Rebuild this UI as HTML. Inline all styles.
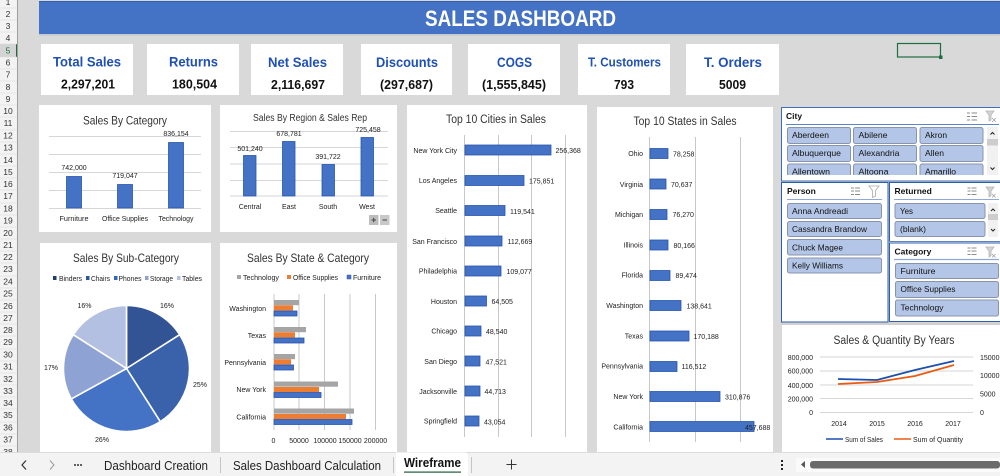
<!DOCTYPE html>
<html><head><meta charset="utf-8"><title>Sales Dashboard</title>
<style>
html,body{margin:0;padding:0;background:#d9d9d9;width:1000px;height:476px;overflow:hidden}
svg{display:block;font-family:"Liberation Sans",sans-serif}
body>svg{filter:blur(.25px)}
.c{text-anchor:middle}.e{text-anchor:end}
.l{font-size:7px;fill:#222}
.t{fill:#333}
.k{font-size:14px;font-weight:bold;fill:#1f50b5}
.v{font-size:13px;font-weight:bold;fill:#111}
.b{fill:#b4c6e7;stroke:#8794ab;stroke-width:1}
.bt{font-size:8.6px;fill:#111}
.h{font-size:8.5px;font-weight:bold;fill:#111}
.g{stroke:#d6d6d6;stroke-width:1}
.a{stroke:#c8c8c8;stroke-width:1}
.bar{fill:#4472c4;stroke:#2a56b0;stroke-width:.8}
.r{font-size:8.5px;fill:#333;text-anchor:middle}
.rl{stroke:#d8d8d8;stroke-width:.6}
.ic{stroke:#666;stroke-width:.8;fill:none}
.icg{stroke:#b5b5b5;stroke-width:.8;fill:#d4d4d4}
</style></head><body>
<svg width="1000" height="476" viewBox="0 0 1000 476" xmlns="http://www.w3.org/2000/svg">
<rect width="1000" height="476" fill="#d9d9d9"/>
<!-- row header -->
<rect x="0" y="0" width="17" height="452" fill="#f3f3f3"/>
<rect x="0" y="44" width="17" height="13" fill="#d4d4d4"/>
<rect x="16" y="44" width="1.5" height="13" fill="#1e6e42"/>
<line x1="17.5" y1="0" x2="17.5" y2="452" stroke="#9e9e9e"/>
<g class="rl">
<line x1="0" x2="17" y1="8" y2="8"/><line x1="0" x2="17" y1="20" y2="20"/><line x1="0" x2="17" y1="32" y2="32"/><line x1="0" x2="17" y1="44" y2="44"/><line x1="0" x2="17" y1="57" y2="57"/><line x1="0" x2="17" y1="69" y2="69"/><line x1="0" x2="17" y1="81" y2="81"/><line x1="0" x2="17" y1="93" y2="93"/><line x1="0" x2="17" y1="105" y2="105"/><line x1="0" x2="17" y1="117" y2="117"/><line x1="0" x2="17" y1="130" y2="130"/><line x1="0" x2="17" y1="142" y2="142"/><line x1="0" x2="17" y1="154" y2="154"/><line x1="0" x2="17" y1="166" y2="166"/><line x1="0" x2="17" y1="178" y2="178"/><line x1="0" x2="17" y1="190" y2="190"/><line x1="0" x2="17" y1="203" y2="203"/><line x1="0" x2="17" y1="215" y2="215"/><line x1="0" x2="17" y1="227" y2="227"/><line x1="0" x2="17" y1="239" y2="239"/><line x1="0" x2="17" y1="251" y2="251"/><line x1="0" x2="17" y1="263" y2="263"/><line x1="0" x2="17" y1="276" y2="276"/><line x1="0" x2="17" y1="288" y2="288"/><line x1="0" x2="17" y1="300" y2="300"/><line x1="0" x2="17" y1="312" y2="312"/><line x1="0" x2="17" y1="324" y2="324"/><line x1="0" x2="17" y1="336" y2="336"/><line x1="0" x2="17" y1="349" y2="349"/><line x1="0" x2="17" y1="361" y2="361"/><line x1="0" x2="17" y1="373" y2="373"/><line x1="0" x2="17" y1="385" y2="385"/><line x1="0" x2="17" y1="397" y2="397"/><line x1="0" x2="17" y1="409" y2="409"/><line x1="0" x2="17" y1="422" y2="422"/><line x1="0" x2="17" y1="434" y2="434"/><line x1="0" x2="17" y1="446" y2="446"/>
</g>
<g>
<text class="r" x="8" y="5">1</text><text class="r" x="8" y="17">2</text><text class="r" x="8" y="29">3</text><text class="r" x="8" y="41">4</text><text class="r" x="8" y="53.5" style="fill:#1e6e42">5</text><text class="r" x="8" y="65.5">6</text><text class="r" x="8" y="77.5">7</text><text class="r" x="8" y="90">8</text><text class="r" x="8" y="102">9</text><text class="r" x="8" y="114">10</text><text class="r" x="8" y="126">11</text><text class="r" x="8" y="138.5">12</text><text class="r" x="8" y="150.5">13</text><text class="r" x="8" y="163">14</text><text class="r" x="8" y="175">15</text><text class="r" x="8" y="187">16</text><text class="r" x="8" y="199">17</text><text class="r" x="8" y="211.5">18</text><text class="r" x="8" y="223.5">19</text><text class="r" x="8" y="236">20</text><text class="r" x="8" y="248">21</text><text class="r" x="8" y="260">22</text><text class="r" x="8" y="272">23</text><text class="r" x="8" y="284.5">24</text><text class="r" x="8" y="296.5">25</text><text class="r" x="8" y="309">26</text><text class="r" x="8" y="321">27</text><text class="r" x="8" y="333">28</text><text class="r" x="8" y="345">29</text><text class="r" x="8" y="357.5">30</text><text class="r" x="8" y="369.5">31</text><text class="r" x="8" y="382">32</text><text class="r" x="8" y="394">33</text><text class="r" x="8" y="406">34</text><text class="r" x="8" y="418">35</text><text class="r" x="8" y="430.5">36</text><text class="r" x="8" y="442.5">37</text><text class="r" x="8" y="455">38</text>
</g>
<!-- banner -->
<rect x="39" y="1" width="961" height="33" fill="#4472c4"/>
<rect x="39" y="1" width="961" height="1" fill="#2f5fb5"/>
<rect x="39" y="34" width="961" height="1.5" fill="#c4c8cf"/>
<text x="425" y="26" font-size="22" font-weight="bold" fill="#fff" textLength="191" lengthAdjust="spacingAndGlyphs">SALES DASHBOARD</text>
<!-- KPI cards -->
<g fill="#fff">
<rect x="41" y="44" width="92" height="51"/><rect x="147" y="44" width="92" height="51"/><rect x="251" y="44" width="92" height="51"/><rect x="361" y="44" width="91" height="51"/><rect x="468" y="44" width="92" height="51"/><rect x="578" y="44" width="92" height="51"/><rect x="686" y="44" width="93" height="51"/>
</g>
<text class="k" x="53" y="66.5" textLength="68" lengthAdjust="spacingAndGlyphs">Total Sales</text>
<text class="k" x="169" y="66.5" textLength="49" lengthAdjust="spacingAndGlyphs">Returns</text>
<text class="k" x="268" y="67" textLength="59" lengthAdjust="spacingAndGlyphs">Net Sales</text>
<text class="k" x="376" y="67" textLength="62" lengthAdjust="spacingAndGlyphs">Discounts</text>
<text class="k" x="497" y="67" textLength="35" lengthAdjust="spacingAndGlyphs">COGS</text>
<text class="k" x="588" y="66.5" style="font-size:12.5px" textLength="73" lengthAdjust="spacingAndGlyphs">T. Customers</text>
<text class="k" x="704" y="67" textLength="58" lengthAdjust="spacingAndGlyphs">T. Orders</text>
<text class="v" x="61" y="88.5" textLength="54" lengthAdjust="spacingAndGlyphs">2,297,201</text>
<text class="v" x="172" y="88.5" textLength="45" lengthAdjust="spacingAndGlyphs">180,504</text>
<text class="v" x="271" y="89" textLength="54" lengthAdjust="spacingAndGlyphs">2,116,697</text>
<text class="v" x="380" y="89" textLength="53" lengthAdjust="spacingAndGlyphs">(297,687)</text>
<text class="v" x="482" y="89" textLength="64" lengthAdjust="spacingAndGlyphs">(1,555,845)</text>
<text class="v" x="614" y="89" textLength="20" lengthAdjust="spacingAndGlyphs">793</text>
<text class="v" x="719" y="89" textLength="27" lengthAdjust="spacingAndGlyphs">5009</text>
<!-- selected cell -->
<rect x="897.5" y="43.5" width="43" height="13.5" fill="#d9d9d9" stroke="#1e6e42" stroke-width="1.2"/>
<rect x="939" y="55.5" width="3.5" height="3.5" fill="#1e6e42"/>
<!-- Panels -->
<g fill="#fff">
<rect x="39" y="105" width="172" height="127"/><rect x="220" y="105" width="177" height="127"/><rect x="407" y="105" width="180" height="347"/><rect x="597" y="107" width="176" height="345"/><rect x="40" y="243" width="171" height="209"/><rect x="220" y="243" width="177" height="209"/><rect x="782" y="325" width="218" height="127"/>
</g>
<!-- Sales by Category -->
<text class="t c" x="125" y="124.5" font-size="12" textLength="84" lengthAdjust="spacingAndGlyphs">Sales By Category</text>
<g class="g"><line x1="49" x2="201" y1="136.5" y2="136.5"/><line x1="49" x2="201" y1="154.5" y2="154.5"/><line x1="49" x2="201" y1="172.5" y2="172.5"/><line x1="49" x2="201" y1="190.5" y2="190.5"/><line x1="49" x2="201" y1="208.5" y2="208.5"/></g>
<rect class="bar" x="66.5" y="176.5" width="15" height="31.5"/><rect class="bar" x="117.5" y="184.5" width="15" height="23.5"/><rect class="bar" x="168.5" y="142.5" width="15" height="65.5"/>
<g class="l c"><text x="74" y="170">742,000</text><text x="125" y="178">719,047</text><text x="176" y="136">836,154</text><text x="74" y="221" textLength="29" lengthAdjust="spacingAndGlyphs">Furniture</text><text x="125" y="221" textLength="46" lengthAdjust="spacingAndGlyphs">Office Supplies</text><text x="176" y="221" textLength="35" lengthAdjust="spacingAndGlyphs">Technology</text></g>
<!-- Sales by Region -->
<text class="t c" x="310" y="121" font-size="10" textLength="114" lengthAdjust="spacingAndGlyphs">Sales By Region &amp; Sales Rep</text>
<g class="g"><line x1="230" x2="388" y1="131.5" y2="131.5"/><line x1="230" x2="388" y1="147.5" y2="147.5"/><line x1="230" x2="388" y1="164" y2="164"/><line x1="230" x2="388" y1="180.5" y2="180.5"/><line x1="230" x2="388" y1="196" y2="196"/></g>
<rect class="bar" x="243.5" y="155.5" width="12.5" height="40.5"/><rect class="bar" x="282.5" y="141.5" width="12.5" height="54.5"/><rect class="bar" x="322" y="164.5" width="12.5" height="31.5"/><rect class="bar" x="361" y="137.5" width="12.5" height="58.5"/>
<g class="l c"><text x="250" y="151">501,240</text><text x="289" y="136">678,781</text><text x="328" y="159">391,722</text><text x="368" y="132">725,458</text><text x="250" y="209">Central</text><text x="289" y="209">East</text><text x="328" y="209">South</text><text x="367" y="209">West</text></g>
<rect x="369" y="215" width="9.5" height="10" fill="#bdbdbd"/><rect x="380" y="215" width="9.5" height="10" fill="#c8c8c8"/>
<path d="M371.5 220h4.5M373.7 217.8v4.5M382.5 220h4.5" stroke="#444" stroke-width="1" fill="none"/>
<!-- Top 10 Cities -->
<text class="t c" x="496" y="123" font-size="11.5" textLength="100" lengthAdjust="spacingAndGlyphs">Top 10 Cities in Sales</text>
<g class="a"><line x1="464.5" x2="464.5" y1="135" y2="437"/><line x1="498.5" x2="498.5" y1="135" y2="437"/><line x1="531.5" x2="531.5" y1="135" y2="437"/><line x1="565.5" x2="565.5" y1="135" y2="437"/></g>
<g>
<rect class="bar" x="465" y="145" width="86" height="10"/><rect class="bar" x="465" y="175.5" width="59" height="10"/><rect class="bar" x="465" y="205.5" width="40" height="10"/><rect class="bar" x="465" y="236" width="37" height="10"/><rect class="bar" x="465" y="266" width="36" height="10"/><rect class="bar" x="465" y="296" width="21.5" height="10"/><rect class="bar" x="465" y="326" width="16" height="10"/><rect class="bar" x="465" y="356" width="15" height="10"/><rect class="bar" x="465" y="386" width="15" height="10"/><rect class="bar" x="465" y="416" width="14" height="10"/>
</g>
<g class="l e">
<text x="457" y="153">New York City</text><text x="457" y="183">Los Angeles</text><text x="457" y="213">Seattle</text><text x="457" y="244">San Francisco</text><text x="457" y="273.5">Philadelphia</text><text x="457" y="304">Houston</text><text x="457" y="333.5">Chicago</text><text x="457" y="364">San Diego</text><text x="457" y="394">Jacksonville</text><text x="457" y="423.5">Springfield</text>
</g>
<g class="l">
<text x="555.5" y="153">256,368</text><text x="529" y="183.5">175,851</text><text x="510" y="214">119,541</text><text x="507.5" y="244">112,669</text><text x="506.5" y="274">109,077</text><text x="491.5" y="304">64,505</text><text x="486" y="334">48,540</text><text x="485.5" y="364.5">47,521</text><text x="484.5" y="394">44,713</text><text x="484" y="424.5">43,054</text>
</g>
<!-- Top 10 States -->
<text class="t c" x="685" y="125" font-size="11.5" textLength="103" lengthAdjust="spacingAndGlyphs">Top 10 States in Sales</text>
<g class="a"><line x1="649.5" x2="649.5" y1="137" y2="442"/><line x1="695.5" x2="695.5" y1="137" y2="442"/><line x1="740.5" x2="740.5" y1="137" y2="442"/></g>
<g>
<rect class="bar" x="650" y="148.5" width="18" height="10"/><rect class="bar" x="650" y="179" width="16" height="10"/><rect class="bar" x="650" y="209.5" width="17" height="10"/><rect class="bar" x="650" y="240" width="18" height="10"/><rect class="bar" x="650" y="270.5" width="20" height="10"/><rect class="bar" x="650" y="300.5" width="31" height="10"/><rect class="bar" x="650" y="331" width="39" height="10"/><rect class="bar" x="650" y="361.5" width="27" height="10"/><rect class="bar" x="650" y="391.5" width="70" height="10"/><rect class="bar" x="650" y="421.5" width="104" height="10"/>
</g>
<g class="l e">
<text x="643" y="156">Ohio</text><text x="643" y="187">Virginia</text><text x="643" y="217">Michigan</text><text x="643" y="247.5">Illinois</text><text x="643" y="277.5">Florida</text><text x="643" y="308">Washington</text><text x="643" y="338.5">Texas</text><text x="643" y="368.5">Pennsylvania</text><text x="643" y="399">New York</text><text x="643" y="429.5">California</text>
</g>
<g class="l">
<text x="673" y="156.5">78,258</text><text x="671" y="187">70,637</text><text x="672.5" y="217">76,270</text><text x="673.5" y="248">80,166</text><text x="675.5" y="278">89,474</text><text x="686.5" y="308.5">138,641</text><text x="693.5" y="339">170,188</text><text x="681.5" y="369">116,512</text><text x="725" y="399.5">310,876</text><text x="745" y="430">457,688</text>
</g>
<!-- Pie -->
<text class="t c" x="126" y="262" font-size="12" textLength="106" lengthAdjust="spacingAndGlyphs">Sales By Sub-Category</text>
<g>
<rect x="53" y="276" width="3.5" height="4" fill="#1f3b73"/><rect x="86" y="276" width="3.5" height="4" fill="#2f5597"/><rect x="114" y="276" width="3.5" height="4" fill="#3266c0"/><rect x="145" y="276" width="3.5" height="4" fill="#8fa2d4"/><rect x="177" y="276" width="3.5" height="4" fill="#b4c0e2"/>
</g>
<g class="l">
<text x="59" y="281" textLength="23" lengthAdjust="spacingAndGlyphs">Binders</text><text x="91" y="281" textLength="19" lengthAdjust="spacingAndGlyphs">Chairs</text><text x="118.5" y="281" textLength="23" lengthAdjust="spacingAndGlyphs">Phones</text><text x="150" y="281" textLength="23" lengthAdjust="spacingAndGlyphs">Storage</text><text x="182" y="281" textLength="20" lengthAdjust="spacingAndGlyphs">Tables</text>
</g>
<g stroke="#fff" stroke-width="1.6">
<path d="M126.5 368.5V305.5A63 63 0 0 1 179.7 334.7Z" fill="#325494"/>
<path d="M126.5 368.5L179.7 334.7A63 63 0 0 1 160.3 421.7Z" fill="#3a62ab"/>
<path d="M126.5 368.5L160.3 421.7A63 63 0 0 1 71.3 398.9Z" fill="#4472c4"/>
<path d="M126.5 368.5L71.3 398.9A63 63 0 0 1 73.3 334.7Z" fill="#8fa2d4"/>
<path d="M126.5 368.5L73.3 334.7A63 63 0 0 1 126.5 305.5Z" fill="#b4c0e2"/>
</g>
<g class="l c"><text x="167" y="308">16%</text><text x="200" y="387">25%</text><text x="102" y="442">26%</text><text x="51" y="370">17%</text><text x="84.5" y="308">16%</text></g>
<!-- State & Category -->
<text class="t c" x="308" y="262" font-size="12" textLength="122" lengthAdjust="spacingAndGlyphs">Sales By State &amp; Category</text>
<rect x="237" y="275" width="4" height="4" fill="#a5a5a5"/><rect x="287" y="275" width="4" height="4" fill="#ed7d31"/><rect x="347" y="275" width="4" height="4" fill="#4472c4" stroke="#2a56b0" stroke-width=".5"/>
<g class="l"><text x="243" y="280" textLength="36" lengthAdjust="spacingAndGlyphs">Technology</text><text x="293" y="280" textLength="45" lengthAdjust="spacingAndGlyphs">Office Supplies</text><text x="353" y="280" textLength="28" lengthAdjust="spacingAndGlyphs">Furniture</text></g>
<g class="a"><line x1="274" x2="274" y1="294" y2="430"/><line x1="299" x2="299" y1="294" y2="430"/><line x1="324.5" x2="324.5" y1="294" y2="430"/><line x1="350" x2="350" y1="294" y2="430"/><line x1="375.5" x2="375.5" y1="294" y2="430"/></g>
<g fill="#a5a5a5"><rect x="274" y="300" width="25" height="5.2"/><rect x="274" y="327" width="32" height="5.2"/><rect x="274" y="354" width="21" height="5.2"/><rect x="274" y="381.5" width="64" height="5.2"/><rect x="274" y="408.5" width="80" height="5.2"/></g>
<g fill="#ed7d31"><rect x="274" y="305.3" width="19" height="5.2"/><rect x="274" y="332.3" width="21" height="5.2"/><rect x="274" y="359.3" width="17" height="5.2"/><rect x="274" y="387" width="45" height="5.2"/><rect x="274" y="414" width="72" height="5.2"/></g>
<g class="bar"><rect x="274" y="311" width="23" height="5"/><rect x="274" y="338" width="30" height="5"/><rect x="274" y="365" width="19.5" height="5"/><rect x="274" y="392.5" width="47" height="5"/><rect x="274" y="419.5" width="78" height="5"/></g>
<g class="l e"><text x="266" y="311">Washington</text><text x="266" y="338">Texas</text><text x="266" y="365">Pennsylvania</text><text x="266" y="392">New York</text><text x="266" y="419.5">California</text></g>
<g class="l c"><text x="273.5" y="443">0</text><text x="299" y="443">50000</text><text x="325" y="443">100000</text><text x="350" y="443">150000</text><text x="375.5" y="443">200000</text></g>
<!-- City slicer -->
<rect x="781.5" y="107.5" width="219" height="73.5" fill="#fff" stroke="#3f6db8" stroke-width="1"/>
<text class="h" x="786" y="119">City</text>
<line x1="786" x2="999" y1="124.5" y2="124.5" stroke="#5b86cf" stroke-width="1"/>
<svg x="786" y="126" width="200" height="49" viewBox="786 126 200 49">
<g class="b"><rect x="787.5" y="127.5" width="63" height="16" rx="2"/><rect x="853.5" y="127.5" width="63" height="16" rx="2"/><rect x="920" y="127.5" width="63" height="16" rx="2"/><rect x="787.5" y="145.5" width="63" height="16" rx="2"/><rect x="853.5" y="145.5" width="63" height="16" rx="2"/><rect x="920" y="145.5" width="63" height="16" rx="2"/><rect x="787.5" y="164" width="63" height="16" rx="2"/><rect x="853.5" y="164" width="63" height="16" rx="2"/><rect x="920" y="164" width="63" height="16" rx="2"/></g>
<g class="bt"><text x="792" y="138" textLength="37" lengthAdjust="spacingAndGlyphs">Aberdeen</text><text x="858.5" y="138" textLength="29" lengthAdjust="spacingAndGlyphs">Abilene</text><text x="925" y="138" textLength="22" lengthAdjust="spacingAndGlyphs">Akron</text><text x="792" y="156" textLength="49" lengthAdjust="spacingAndGlyphs">Albuquerque</text><text x="858.5" y="156" textLength="41" lengthAdjust="spacingAndGlyphs">Alexandria</text><text x="925" y="156" textLength="19" lengthAdjust="spacingAndGlyphs">Allen</text><text x="792" y="174.5" textLength="38" lengthAdjust="spacingAndGlyphs">Allentown</text><text x="858.5" y="174.5" textLength="30" lengthAdjust="spacingAndGlyphs">Altoona</text><text x="925" y="174.5" textLength="31" lengthAdjust="spacingAndGlyphs">Amarillo</text></g>
</svg>
<rect x="987" y="127" width="11" height="48" fill="#f1f1f1"/><rect x="987" y="139" width="11" height="6.5" fill="#cdcdcd"/>
<path d="M990.5 134.500l2-2 2 2M990.5 167.500l2 2 2-2" stroke="#222" stroke-width="1" fill="none"/>
<g class="ic"><path d="M967 113h3M967 116.500h3M967 120h3M971.500 113h5.500M971.500 116.500h5.500M971.500 120h5.500"/></g>
<path d="M986 111h8l-3 4v5l-2 1v-6z" class="icg"/><path d="M992 118l4 4M996 118l-4 4" stroke="#999" stroke-width=".7"/>
<!-- Person slicer -->
<rect x="781.5" y="182.5" width="106.5" height="139.5" fill="#fff" stroke="#2f5cab" stroke-width="1"/>
<text class="h" x="787" y="194">Person</text>
<line x1="787" x2="882" y1="199.5" y2="199.5" stroke="#8fa9d8"/>
<g class="b"><rect x="787.5" y="203.5" width="94" height="15" rx="2"/><rect x="787.5" y="221.5" width="94" height="15" rx="2"/><rect x="787.5" y="239.5" width="94" height="15.5" rx="2"/><rect x="787.5" y="258" width="94" height="15" rx="2"/></g>
<g class="bt"><text x="792" y="214" textLength="56" lengthAdjust="spacingAndGlyphs">Anna Andreadi</text><text x="792" y="232" textLength="75" lengthAdjust="spacingAndGlyphs">Cassandra Brandow</text><text x="792" y="250.5" textLength="51" lengthAdjust="spacingAndGlyphs">Chuck Magee</text><text x="792" y="268.5" textLength="51" lengthAdjust="spacingAndGlyphs">Kelly Williams</text></g>
<g class="ic"><path d="M851 188h3M851 191h3M851 194.500h3M855 188h5M855 191h5M855 194.500h5"/></g>
<path d="M869 186h10l-3.500 4.500v5.500l-3 1.500v-7z" stroke="#aaa" stroke-width=".8" fill="none"/>
<!-- Returned slicer -->
<rect x="889.5" y="182.5" width="111" height="59" fill="#fff" stroke="#2f5cab" stroke-width="1"/>
<text class="h" x="894.5" y="194">Returned</text>
<line x1="894" x2="999" y1="199.5" y2="199.5" stroke="#8fa9d8"/>
<g class="b"><rect x="895" y="203.5" width="90" height="15" rx="2"/><rect x="895" y="221.5" width="90" height="15" rx="2"/></g>
<g class="bt"><text x="900" y="214" textLength="13" lengthAdjust="spacingAndGlyphs">Yes</text><text x="900" y="232" textLength="26" lengthAdjust="spacingAndGlyphs">(blank)</text></g>
<rect x="988" y="203" width="10" height="34" fill="#f1f1f1"/><rect x="988" y="214" width="10" height="6" fill="#cdcdcd"/>
<path d="M991 211l2-2 2 2M991 229l2 2 2-2" stroke="#222" stroke-width="1" fill="none"/>
<g class="ic"><path d="M967.500 188h3M967.500 191h3M967.500 194.500h3M971.500 188h5M971.500 191h5M971.500 194.500h5"/></g>
<path d="M986 187h8l-3 4v4.500l-2 1.500v-6z" class="icg"/><path d="M992 194l3.500 3.500M995.500 194l-3.500 3.500" stroke="#999" stroke-width=".7"/>
<!-- Category slicer -->
<rect x="889.5" y="243" width="111" height="78.5" fill="#fff" stroke="#2f5cab" stroke-width="1"/>
<rect x="889" y="241.5" width="111" height="1.5" fill="#8fa9d8"/>
<text class="h" x="894.5" y="254.5">Category</text>
<line x1="894" x2="999" y1="259.5" y2="259.5" stroke="#8fa9d8" stroke-width="1.2"/>
<g class="b"><rect x="895.5" y="263.5" width="103" height="15" rx="2"/><rect x="895.5" y="281.5" width="103" height="16" rx="2"/><rect x="895.5" y="300" width="103" height="16" rx="2"/></g>
<g class="bt"><text x="900.5" y="274" textLength="35" lengthAdjust="spacingAndGlyphs">Furniture</text><text x="900.5" y="292" textLength="55" lengthAdjust="spacingAndGlyphs">Office Supplies</text><text x="900.5" y="310.5" textLength="43" lengthAdjust="spacingAndGlyphs">Technology</text></g>
<g class="ic"><path d="M967.500 248h3M967.500 251h3M967.500 254.500h3M971.500 248h5M971.500 251h5M971.500 254.500h5"/></g>
<path d="M986 247h8l-3 4v4.500l-2 1.500v-6z" class="icg"/><path d="M992 254l3.500 3.500M995.500 254l-3.500 3.500" stroke="#999" stroke-width=".7"/>
<!-- Line chart -->
<rect x="781" y="322.5" width="219" height="2.5" fill="#d0d0d0"/>
<text class="t c" x="894" y="344" font-size="11.5" textLength="121" lengthAdjust="spacingAndGlyphs">Sales &amp; Quantity By Years</text>
<g class="g"><line x1="820" x2="973" y1="357" y2="357"/><line x1="820" x2="973" y1="371" y2="371"/><line x1="820" x2="973" y1="385" y2="385"/><line x1="820" x2="973" y1="398.5" y2="398.5"/><line x1="820" x2="973" y1="412.5" y2="412.5"/></g>
<g class="l e"><text x="813" y="360">800,000</text><text x="813" y="373.5">600,000</text><text x="813" y="388">400,000</text><text x="813" y="401.5">200,000</text><text x="813" y="415">0</text></g>
<g class="l"><text x="980" y="360">15000</text><text x="980" y="378">10000</text><text x="980" y="396.5">5000</text><text x="980" y="415">0</text></g>
<g class="l c"><text x="839" y="426">2014</text><text x="877" y="426">2015</text><text x="915" y="426">2016</text><text x="953" y="426">2017</text></g>
<path d="M838 379L877 380 915 370 954 361" fill="none" stroke="#1c4fb0" stroke-width="1.8"/>
<path d="M838 384L877 382 915 376 954 365" fill="none" stroke="#ea5b12" stroke-width="1.8"/>
<line x1="826" x2="843" y1="439" y2="439" stroke="#1c4fb0" stroke-width="1.5"/><line x1="894" x2="911" y1="439" y2="439" stroke="#ea5b12" stroke-width="1.5"/>
<g class="l"><text x="845" y="442" textLength="38" lengthAdjust="spacingAndGlyphs">Sum of Sales</text><text x="913" y="442" textLength="50" lengthAdjust="spacingAndGlyphs">Sum of Quantity</text></g>
<!-- Tab bar -->
<rect x="0" y="452" width="1000" height="24" fill="#f3f3f3"/>
<line x1="0" x2="1000" y1="452.5" y2="452.5" stroke="#dcdcdc"/>
<path d="M26 460.500l-4 4.500 4 4.500" fill="none" stroke="#333" stroke-width="1.2"/>
<path d="M50 460.500l4 4.500-4 4.500" fill="none" stroke="#999" stroke-width="1"/>
<g fill="#333"><circle cx="75" cy="465" r="1"/><circle cx="78" cy="465" r="1"/><circle cx="81" cy="465" r="1"/></g>
<text x="104" y="470" font-size="13" fill="#222" textLength="104" lengthAdjust="spacingAndGlyphs">Dashboard Creation</text>
<line x1="220.5" x2="220.5" y1="457" y2="473" stroke="#c4c4c4"/>
<text x="233" y="470" font-size="13" fill="#222" textLength="148" lengthAdjust="spacingAndGlyphs">Sales Dashboard Calculation</text>
<line x1="393.5" x2="393.5" y1="457" y2="473" stroke="#c4c4c4"/>
<path d="M396 476V452.500H466.500L468 456V476Z" fill="#fff"/>
<text x="404" y="467" font-size="13" font-weight="bold" fill="#111" textLength="57" lengthAdjust="spacingAndGlyphs">Wireframe</text>
<rect x="404" y="471.5" width="57" height="1.2" fill="#1e5c38"/>
<line x1="471.5" x2="471.5" y1="457" y2="473" stroke="#c4c4c4"/>
<path d="M511.500 459.500v10M506.500 464.500h10" stroke="#333" stroke-width="1"/>
<g fill="#222"><rect x="781" y="460" width="2" height="2"/><rect x="781" y="464" width="2" height="2"/><rect x="781" y="468" width="2" height="2"/></g>
<rect x="796" y="458" width="204" height="14" fill="#fafafa"/>
<path d="M805 461v7l-4-3.500z" fill="#555"/>
<rect x="810" y="461" width="190" height="7.5" rx="3" fill="#6a6a6a"/>
</svg>
</body></html>
